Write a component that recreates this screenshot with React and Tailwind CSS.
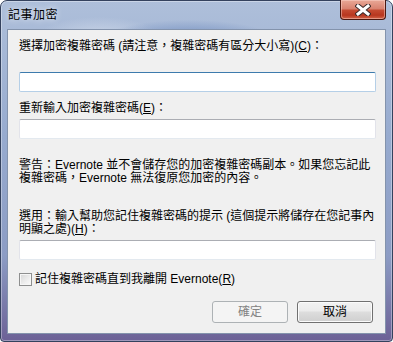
import React from "react";

function Input({ focused }) {
  return (
    <div
      className={
        focused
          ? "w-[357px] h-[20px] bg-white border border-[#b5cfe7] border-t-[#3d7bad] rounded-[2px]"
          : "w-[357px] h-[20px] bg-white border border-[#e2e3ea] border-t-[#abadb3] border-b-[#e3e9ef] rounded-[2px]"
      }
    />
  );
}

export default function App() {
  return (
    <div className="w-[393px] h-[342px] font-['Liberation_Sans','Noto_Sans_CJK_TC',sans-serif] text-[12px] text-black">
      <div className="w-full h-full flex flex-col border border-[#34425e] rounded-t-[7px] rounded-b-[4px] px-[6px] pb-[7px] bg-[radial-gradient(ellipse_90px_22px_at_48%_12%,#6a88bd_0%,rgba(106,136,189,0)_100%),radial-gradient(ellipse_80px_20px_at_70%_18%,#7f9bc8_0%,rgba(127,155,200,0)_100%),radial-gradient(ellipse_60px_18px_at_25%_10%,#c7d3e6_0%,rgba(199,211,230,0)_100%),linear-gradient(to_bottom,#aebfda_0%,#97abcf_40%,#8c9cc4_75%,#6c6196_100%)] shadow-[inset_0_0_0_1px_rgba(255,255,255,0.35)]">
        <div className="h-[28px] flex items-start justify-between">
          <div className="pl-[1px] pt-[7px] leading-[15px] text-[12px] tracking-[0.5px] [text-shadow:0_0_6px_rgba(255,255,255,0.95)]">
            記事加密
          </div>
          <div className="w-[46px] h-[20px] -mt-[1px] rounded-b-[4px] border border-[#4a1810] border-t-0 bg-[linear-gradient(to_bottom,#e9a897_0%,#d98370_45%,#c44a31_55%,#b8361f_80%,#d2654a_100%)] shadow-[inset_0_0_0_1px_rgba(255,220,210,0.45)] flex items-center justify-center">
            <svg width="16" height="12" viewBox="0 0 16 12">
              <path d="M3 2 L13 10 M13 2 L3 10" stroke="#3b2a2a" strokeWidth="5" strokeLinecap="square" fill="none" />
              <path d="M3 2 L13 10 M13 2 L3 10" stroke="#ffffff" strokeWidth="3" strokeLinecap="square" fill="none" />
            </svg>
          </div>
        </div>
        <div className="flex-1 border border-[#8393ac] bg-[#f0f0f0] flex flex-col pl-[11px] pt-[10px] leading-[13px]">
          <div className="h-[13px] whitespace-nowrap">
            選擇加密複雜密碼 (請注意，複雜密碼有區分大小寫)(<span className="underline">C</span>)：
          </div>
          <div className="mt-[19px]">
            <Input focused />
          </div>
          <div className="mt-[10px] h-[13px] whitespace-nowrap">
            重新輸入加密複雜密碼(<span className="underline">E</span>)：
          </div>
          <div className="mt-[4px]">
            <Input />
          </div>
          <div className="mt-[20px] whitespace-nowrap">
            <div className="h-[13px]">警告：Evernote 並不會儲存您的加密複雜密碼副本。如果您忘記此</div>
            <div className="h-[13px]">複雜密碼，Evernote 無法復原您加密的內容。</div>
          </div>
          <div className="mt-[25px] whitespace-nowrap">
            <div className="h-[13px]">選用：輸入幫助您記住複雜密碼的提示 (這個提示將儲存在您記事內</div>
            <div className="h-[13px]">
              明顯之處)(<span className="underline">H</span>)：
            </div>
          </div>
          <div className="mt-[4px]">
            <Input />
          </div>
          <div className="mt-[13px] h-[13px] flex items-center">
            <div className="w-[13px] h-[13px] border border-[#8e8f8f] bg-[linear-gradient(135deg,#d6d6d6_0%,#eeeeee_60%,#fbfbfb_100%)] shadow-[inset_0_0_0_1px_#f6f6f6]" />
            <div className="ml-[3px] whitespace-nowrap">
              記住複雜密碼直到我離開 Evernote(<span className="underline">R</span>)
            </div>
          </div>
          <div className="mt-[15px] w-[357px] pr-[3px] flex justify-end gap-[9px]">
            <div className="w-[76px] h-[22px] rounded-[3px] border border-[#adb2b5] bg-[#f4f4f4] text-[#838383] flex items-center justify-center">
              確定
            </div>
            <div className="w-[76px] h-[22px] rounded-[3px] border border-[#707070] bg-[linear-gradient(to_bottom,#f2f2f2_0%,#ebebeb_45%,#dddddd_50%,#cfcfcf_100%)] shadow-[inset_0_0_0_1px_#fbfbfb] flex items-center justify-center">
              取消
            </div>
          </div>
        </div>
      </div>
    </div>
  );
}
